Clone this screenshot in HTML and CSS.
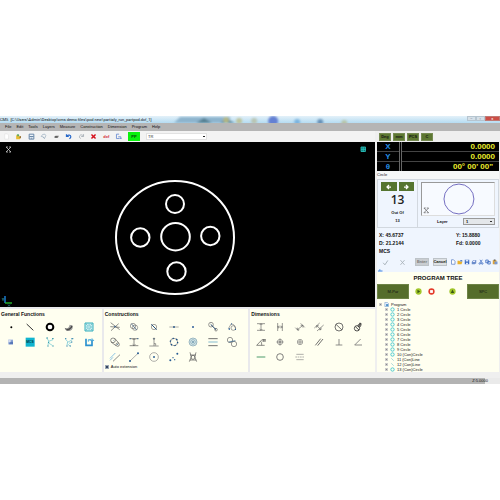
FILE: index.html
```html
<!DOCTYPE html>
<html lang="en">
<head>
<meta charset="utf-8">
<title>CMS</title>
<link rel="stylesheet" href="styles.css">
</head>
<body>
<svg class="defs" aria-hidden="true">
  <symbol id="tree-circle" viewBox="0 0 12 12"><circle cx="6" cy="6" r="4" fill="none" stroke="#35c3cb" stroke-width="2"/></symbol>
  <symbol id="tree-line" viewBox="0 0 12 12"><path d="M3 3l6 6" stroke="#7fc4cc" stroke-width="1.5"/></symbol>
</svg>
<div class="app">
  <header class="titlebar">
    <span>CMS&nbsp; [C:\Users\Admin\Desktop\cms demo files\pcd new\partialy_run_partpcd.dxf_1]</span>
    <svg class="glass" viewBox="0 0 315 7" preserveAspectRatio="none" aria-hidden="true">
      <defs><filter id="soft"><feGaussianBlur stdDeviation="1"/></filter></defs>
      <g filter="url(#soft)">
        <path d="M28 1H78V7H22Z" fill="#8db4cd"/><path d="M44 7l8-5 8 5zM68 7l6-4 9 4z" fill="#547f91"/>
        <circle cx="74" cy="4" r="3" fill="#b3b785"/><circle cx="87" cy="5" r="3" fill="#bec49c"/><circle cx="102" cy="5" r="3" fill="#b9c5b2"/>
        <circle cx="121" cy="5" r="5" fill="#6480d3"/><circle cx="145" cy="6" r="3" fill="#7cb4df"/><circle cx="168" cy="6" r="3" fill="#6792b8"/><circle cx="192" cy="7" r="3" fill="#b7c4a8"/>
      </g>
    </svg>
    <span class="winbtns"><button aria-label="Minimize">–</button><button aria-label="Maximize">▫</button><button class="close" aria-label="Close">×</button></span>
  </header>
  <nav class="menu">
    <a href="#">File</a><a href="#">Edit</a><a href="#">Tools</a><a href="#">Layers</a><a href="#">Measure</a><a href="#">Construction</a><a href="#">Dimension</a><a href="#">Program</a><a href="#">Help</a>
  </nav>
  <main class="body">
    <section class="left">
      <div class="toolbar">
        <div class="tools">
          <button aria-label="New"><svg viewBox="0 0 24 24"><path d="M6 3h9l4 4v14H6z" fill="#fff" stroke="#e0e0e0" stroke-width="2"/></svg></button>
          <button aria-label="Open"><svg viewBox="0 0 24 24"><path d="M4 8h7l2 3h8l-4 10H4z" fill="#e9bd32"/><path d="M6 6l5-3 4 5-5 5z" fill="#55a356"/><path d="M14 14l6-4v9z" fill="#7d5632"/></svg></button>
          <button aria-label="Save"><svg viewBox="0 0 24 24"><path d="M4 4h16v17H4z" fill="#eef3f8" stroke="#58799e" stroke-width="3"/><path d="M5 12h14" stroke="#58799e" stroke-width="3"/><path d="M9 16v4h6v-4z" fill="#7d96b3"/></svg></button>
          <button aria-label="Import"><svg viewBox="0 0 24 24" fill="none" stroke="#8aa0b5" stroke-width="2"><path d="M4 12l5-7 8-1 3 5-4 9-6-5zM10 13l6 7"/></svg></button>
          <button aria-label="Print"><svg viewBox="0 0 24 24"><path d="M4 13l5-4h11l-3 7H5z" fill="#777"/><path d="M7 14h8" stroke="#222" stroke-width="2"/></svg></button>
          <button aria-label="Undo"><svg viewBox="0 0 24 24" fill="none" stroke="#2868c9" stroke-width="4"><path d="M5 4v8h8M6 11c5-6 14-4 14 2 0 4-3 6-5 7"/></svg></button>
          <button aria-label="Redo"><svg viewBox="0 0 24 24" fill="none" stroke="#a5adb5" stroke-width="3"><path d="M19 4v8h-8M18 10c-5-6-13-4-13 3 0 3 2 5 4 6"/></svg></button>
          <button aria-label="Delete"><svg viewBox="0 0 24 24" stroke="#d5101c" stroke-width="5"><path d="M5 5l14 14M19 5L5 19"/></svg></button>
          <button class="dxf">dxf</button>
          <button aria-label="Export"><svg viewBox="0 0 24 24" fill="none" stroke="#6c8ed2" stroke-width="3"><path d="M14 4H5v15h11M11 13h9v7M17 17l3 3 3-3"/></svg></button>
        </div>
        <button class="pp">PP</button>
        <select class="tr" aria-label="Element"><option>TR</option></select>
      </div>
      <div class="canvas">
        <svg class="drawing" viewBox="0 142 375 165" role="img" aria-label="Part drawing">
          <g fill="none" stroke="#fff" stroke-width="2">
            <ellipse cx="175" cy="237.500" rx="59" ry="56.500"/>
            <ellipse cx="175.500" cy="236.700" rx="14.300" ry="13.700"/>
            <circle cx="175" cy="204" r="9"/><circle cx="140.300" cy="237.500" r="9.200"/><circle cx="210.300" cy="236" r="9.200"/><circle cx="176.500" cy="271.500" r="9.200"/>
          </g>
          <g fill="none" stroke="#ddd" stroke-width=".7"><path d="M6 147l5 5M11 147l-5 5M6 147h2M6 152h2M11 147h-2M11 152h-2"/></g>
          <path d="M361 147h4v4.500h-4z" fill="#0b6f6d"/><path d="M361 147h4.500v4.500H361zM363.200 147v5M361 149.300h5" fill="none" stroke="#2cc9c4" stroke-width=".8"/>
          <path d="M5 296v7" stroke="#1d8df0" stroke-width="1.300"/><path d="M5 303h7" stroke="#28c532" stroke-width="1.300"/>
          <path d="M2 298l1 1.500 1-1.500M3 299v2M8 304.500l2 2M10 304.500l-2 2" stroke="#39a4a4" stroke-width=".6" fill="none"/>
        </svg>
      </div>
      <div class="panels">
        <section class="panel">
          <h2>General Functions</h2>
          <div class="icons c5">
            <button aria-label="Point"><svg viewBox="0 0 36 36"><circle cx="19" cy="19" r="3" fill="#000"/></svg></button>
            <button aria-label="Line"><svg viewBox="0 0 36 36"><path d="M8 9l20 19" stroke="#333" stroke-width="3"/></svg></button>
            <button aria-label="Circle"><svg viewBox="0 0 36 36"><circle cx="18" cy="18" r="10" fill="#fff" stroke="#000" stroke-width="6"/></svg></button>
            <button aria-label="Arc"><svg viewBox="0 0 36 36"><path d="M5 20c5 5 14 1 15-9l9 3c2 10-5 16-13 16-5 0-10-3-11-10z" fill="#999"/><path d="M7 23c8 5 18-1 19-9M11 27c9 0 14-6 16-11" fill="none" stroke="#222" stroke-width="2"/></svg></button>
            <button aria-label="Pattern"><svg viewBox="0 0 36 36"><path d="M6 6h24v24H6z" fill="#c6f0f3" stroke="#36aebb" stroke-width="3"/><circle cx="18" cy="18" r="6" fill="none" stroke="#2d9ba9" stroke-width="2" stroke-dasharray="4 2"/><path d="M10 10h2M24 10h2M10 26h2M24 26h2M17 18h2" stroke="#19717e" stroke-width="2"/></svg></button>
            <button aria-label="Plane"><svg viewBox="0 0 36 36"><path d="M10 11h14v14H10z" fill="#8da5d7"/><path d="M10 11h7v7h-7z" fill="#d6def1"/><path d="M18 17h6v8H11z" fill="#5878b8"/></svg></button>
            <button aria-label="MCS"><svg viewBox="0 0 36 36"><path d="M5 5h27v27H5z" fill="#10b4cf"/><text x="18" y="22" text-anchor="middle" class="mcs">MCS</text></svg></button>
            <button aria-label="Chain"><svg viewBox="0 0 36 36" fill="none" stroke="#62c5d0" stroke-width="2"><path d="M9 7l5 8-2 13M14 16l13-5M15 22l10 6"/><path d="M7 6h5M24 8h5M10 30h4M25 30h4M14 18v3" stroke="#2c91a8" stroke-width="3"/></svg></button>
            <button aria-label="Chain points"><svg viewBox="0 0 36 36" fill="none" stroke="#62bfd3" stroke-width="2"><path d="M8 10l6 7-2 11M14 19l14-8M18 22l8-3M15 25l6 5"/><path d="M6 8h4M25 8h6M10 30h4M20 30h4M24 18h4" stroke="#2c80aa" stroke-width="3"/></svg></button>
            <button aria-label="Axis"><svg viewBox="0 0 36 36"><path d="M9 8v20h18V12" fill="none" stroke="#2c91cf" stroke-width="5"/><path d="M16 17v-6h8M20 15l7-7 6 7" fill="none" stroke="#50afdc" stroke-width="3"/></svg></button>
          </div>
        </section>
        <section class="panel">
          <h2>Constructions</h2>
          <div class="icons c7">
            <button aria-label="Intersection"><svg viewBox="0 0 36 36" fill="none" stroke="#555" stroke-width="2"><path d="M5 5l27 21M29 8L6 29M4 17l28 2"/><circle cx="18" cy="17" r="1.500" stroke="#2b619d"/></svg></button>
            <button aria-label="Circle axis"><svg viewBox="0 0 36 36" fill="none" stroke="#777" stroke-width="2"><circle cx="15" cy="15" r="8"/><circle cx="21" cy="20" r="8"/><path d="M10 8l16 19" stroke="#2b4d78"/></svg></button>
            <button aria-label="Circle midpoint"><svg viewBox="0 0 36 36" fill="none" stroke="#777" stroke-width="2"><circle cx="18" cy="18" r="8"/><path d="M10 10l16 16" stroke="#27517f" stroke-width="3"/></svg></button>
            <button aria-label="Midpoint"><svg viewBox="0 0 36 36"><path d="M4 18h28" stroke="#888" stroke-width="2"/><circle cx="18" cy="18" r="3" fill="#315e8b"/></svg></button>
            <button aria-label="Point"><svg viewBox="0 0 36 36"><circle cx="18" cy="18" r="3" fill="#315e9b"/></svg></button>
            <button aria-label="Two circles line"><svg viewBox="0 0 36 36" fill="none" stroke="#666" stroke-width="2"><circle cx="12" cy="11" r="7"/><circle cx="27" cy="26" r="4"/><path d="M11 10l16 16" stroke="#173c69" stroke-width="3"/></svg></button>
            <button aria-label="Tangent circle"><svg viewBox="0 0 36 36" fill="none" stroke="#777" stroke-width="2"><path d="M7 23L16 8l8 4 5 11"/><circle cx="22" cy="21" r="7"/><path d="M8 24h4M15 9h2M27 25h3" stroke="#265b94" stroke-width="4"/></svg></button>
            <button aria-label="Tangent lines"><svg viewBox="0 0 36 36" fill="none" stroke="#555" stroke-width="2"><circle cx="12" cy="13" r="7"/><circle cx="26" cy="26" r="5"/><path d="M17 7l13 15M6 18l15 11"/><path d="M12 12l1 1M25 25l2 2" stroke="#20588a" stroke-width="3"/></svg></button>
            <button aria-label="Mid line"><svg viewBox="0 0 36 36" fill="none" stroke="#555" stroke-width="2"><path d="M5 8h26M5 29h26M18 9v19M14 12l4-4 4 4M14 25l4 4 4-4"/><path d="M5 8h3M28 8h3" stroke="#245a91" stroke-width="3"/></svg></button>
            <button aria-label="Perpendicular"><svg viewBox="0 0 36 36" fill="none" stroke="#666" stroke-width="2"><path d="M18 8v22M4 30h28M18 23h5v6"/><circle cx="18" cy="8" r="2" fill="#265c90"/></svg></button>
            <button aria-label="Circle by points"><svg viewBox="0 0 36 36" fill="none"><circle cx="18" cy="18" r="11" stroke="#777" stroke-width="2"/><circle cx="18" cy="18" r="11" stroke="#184d85" stroke-width="4" stroke-dasharray="4 7.500"/></svg></button>
            <button aria-label="Concentric"><svg viewBox="0 0 36 36" fill="#d9eced" stroke="#779aaa" stroke-width="2"><circle cx="18" cy="18" r="12"/><circle cx="18" cy="18" r="7"/><circle cx="18" cy="18" r="2" fill="#38739b"/></svg></button>
            <button aria-label="Parallel lines"><svg viewBox="0 0 36 36" stroke-width="2.500"><path d="M4 8h28M4 29h28" stroke="#555"/><path d="M4 18h28" stroke="#6cafc9"/></svg></button>
            <button aria-label="Linked circles"><svg viewBox="0 0 36 36" fill="none" stroke="#666" stroke-width="2"><circle cx="12" cy="12" r="8"/><circle cx="24" cy="24" r="8"/><path d="M8 18L28 14" stroke="#265b8b"/></svg></button>
            <button aria-label="Offset line"><svg viewBox="0 0 36 36" stroke-width="2"><path d="M3 22L19 6M3 28L12 19" stroke="#4ea5dc"/><path d="M12 31L33 11" stroke="#555"/></svg></button>
            <button aria-label="Line by points"><svg viewBox="0 0 36 36"><path d="M6 30L30 7" stroke="#888" stroke-width="2"/><circle cx="6" cy="30" r="3" fill="#265b94"/><circle cx="30" cy="7" r="3" fill="#265b94"/></svg></button>
            <button aria-label="Circle by centre"><svg viewBox="0 0 36 36" fill="none" stroke="#888" stroke-width="2"><circle cx="18" cy="18" r="13"/><circle cx="18" cy="18" r="2" fill="#265b94" stroke="#265b94"/></svg></button>
            <button aria-label="Points"><svg viewBox="0 0 36 36" fill="#265b94"><circle cx="7" cy="28" r="3"/><circle cx="15" cy="20" r="2"/><circle cx="20" cy="26" r="2"/><circle cx="28" cy="8" r="3"/></svg></button>
            <button aria-label="Symmetry"><svg viewBox="0 0 36 36" fill="none" stroke="#555" stroke-width="2"><path d="M9 4l4 14-6 14M27 4l-4 14 6 14M9 12h18M8 27h20"/><circle cx="18" cy="19" r="6"/></svg></button>
          </div>
          <label class="check"><input type="checkbox" checked> Auto extension</label>
        </section>
        <section class="panel">
          <h2>Dimensions</h2>
          <div class="icons c6">
            <button aria-label="Vertical distance"><svg viewBox="0 0 36 36" fill="none" stroke="#666" stroke-width="2"><path d="M6 8h24M6 28h24M18 8v20M14 12l4-4 4 4M14 24l4 4 4-4"/></svg></button>
            <button aria-label="Horizontal distance"><svg viewBox="0 0 36 36" fill="none" stroke="#666" stroke-width="2"><path d="M11 6v24M25 6v24M11 18h14M15 14l-4 4 4 4M21 14l4 4-4 4"/></svg></button>
            <button aria-label="Distance"><svg viewBox="0 0 36 36" fill="none" stroke="#666" stroke-width="2"><path d="M4 20l10 10M20 7l12 12M10 26L27 13M10 20v6h6M20 13h7v7"/></svg></button>
            <button aria-label="Line distance"><svg viewBox="0 0 36 36" fill="none" stroke="#666" stroke-width="2"><path d="M4 21L20 6M12 30L32 12M11 14l13 12M11 20v-6h6M18 26h6v-6"/></svg></button>
            <button aria-label="Diameter"><svg viewBox="0 0 36 36" fill="none" stroke="#555" stroke-width="2.500"><circle cx="18" cy="18" r="12"/><path d="M9 10l18 17"/></svg></button>
            <button aria-label="Radius"><svg viewBox="0 0 36 36" fill="none" stroke="#333" stroke-width="2.500"><circle cx="15" cy="22" r="8"/><path d="M10 17l11 10M20 17l6-10M21 7h6v6"/><circle cx="22" cy="14" r="4"/></svg></button>
            <button aria-label="Angle value"><svg viewBox="0 0 36 36" fill="none" stroke="#555" stroke-width="2"><path d="M5 28h24M5 28L22 10M17 16c3 3 3 7 3 12M22 11h10M22 15h10M25 9v8M30 9v8"/></svg></button>
            <button aria-label="Position"><svg viewBox="0 0 36 36" fill="none" stroke="#777" stroke-width="2"><circle cx="18" cy="18" r="8"/><circle cx="18" cy="18" r="3"/><path d="M18 7v22M7 18h22"/></svg></button>
            <button aria-label="Concentricity"><svg viewBox="0 0 36 36" fill="none" stroke="#777" stroke-width="2"><circle cx="18" cy="18" r="8"/><circle cx="18" cy="18" r="4"/><circle cx="18" cy="18" r="1"/></svg></button>
            <button aria-label="Parallelism"><svg viewBox="0 0 36 36" stroke="#555" stroke-width="2.500"><path d="M7 28L23 8M14 29L30 9"/></svg></button>
            <button aria-label="Perpendicularity"><svg viewBox="0 0 36 36" stroke="#777" stroke-width="2.500"><path d="M18 9v18M8 27h20"/></svg></button>
            <button aria-label="Angle"><svg viewBox="0 0 36 36" fill="none" stroke="#777" stroke-width="2.500"><path d="M26 9L8 27h22"/></svg></button>
            <button aria-label="Straightness"><svg viewBox="0 0 36 36"><path d="M5 18h26" stroke="#4d9b6c" stroke-width="3"/></svg></button>
            <button aria-label="Roundness"><svg viewBox="0 0 36 36"><circle cx="18" cy="18" r="10" fill="none" stroke="#666" stroke-width="2.500"/></svg></button>
            <button aria-label="Symmetry"><svg viewBox="0 0 36 36" stroke="#888" stroke-width="2"><path d="M7 10h22M7 26h22"/><path d="M4 18h28" stroke-dasharray="5 2"/></svg></button>
          </div>
        </section>
      </div>
    </section>
    <aside class="right">
      <div class="modes"><button>Deg</button><button>mm</button><button>PCS</button><button>C</button></div>
      <table class="dro">
        <tr><th>X</th><td>0.0000</td></tr>
        <tr><th>Y</th><td>0.0000</td></tr>
        <tr><th>θ</th><td class="deg">00° 00' 00"</td></tr>
      </table>
      <div class="result">
        <p class="kind">Circle</p>
        <div class="card">
          <div class="count">
            <div class="arrows"><button aria-label="Previous"><svg viewBox="0 0 12 12"><path d="M10 6H3M6 2L2 6l4 4" fill="none" stroke="#fff" stroke-width="2.500"/></svg></button><button aria-label="Next"><svg viewBox="0 0 12 12"><path d="M2 6h7M6 2l4 4-4 4" fill="none" stroke="#fff" stroke-width="2.500"/></svg></button></div>
            <p class="num">13</p>
            <p>Out Of</p>
            <p>13</p>
          </div>
          <div class="view">
            <svg class="preview" viewBox="0 0 76 33" role="img" aria-label="Circle preview"><circle cx="39" cy="16.500" r="15.800" fill="none" stroke="#6d67bd"/><path d="M2 26l5 5M7 26l-5 5M2 26h2M2 31h2M7 26H5M7 31H5" stroke="#555" stroke-width=".7"/></svg>
            <div class="layer"><label for="layer">Layer</label><select id="layer"><option>1</option></select></div>
          </div>
        </div>
        <div class="coords"><span>X: 45.6737</span><span>Y: 15.8880</span><span>D: 21.2144</span><span>Fd: 0.0000</span><span>MCS</span></div>
        <div class="actions">
          <button class="flat" aria-label="Accept"><svg viewBox="0 0 24 24"><path d="M4 13l6 7L20 5" fill="none" stroke="#a0acb4" stroke-width="3"/></svg></button>
          <button class="flat" aria-label="Reject"><svg viewBox="0 0 24 24"><path d="M5 4l14 16M19 4L5 20" stroke="#a9b2b9" stroke-width="3"/></svg></button>
          <button class="push off">Enter</button><button class="push">Cancel</button>
          <span class="files">
            <button aria-label="New"><svg viewBox="0 0 24 24"><path d="M6 3h8l6 6v12H6z" fill="#fff" stroke="#5d83c5" stroke-width="3"/></svg></button>
            <button aria-label="Open"><svg viewBox="0 0 24 24"><path d="M2 7h8l2 3h10l-4 11H2z" fill="#e8b12c"/><path d="M13 4h8v6h-8z" fill="#5d83c5"/></svg></button>
            <button aria-label="Save"><svg viewBox="0 0 24 24"><path d="M3 3h18v18H3z" fill="#3968bf"/><path d="M7 3h10v7H7zM8 15h8v6H8z" fill="#dce7f8"/></svg></button>
            <button aria-label="Print"><svg viewBox="0 0 24 24"><path d="M3 12l6-8h12v13l-6 4H3z" fill="#6b8dcb"/><path d="M10 6h8l-3 6H7z" fill="#eef"/></svg></button>
            <button aria-label="Cut"><svg viewBox="0 0 24 24" fill="none" stroke="#3968bf" stroke-width="3"><path d="M8 3l7 12M17 3L9 15"/><circle cx="7" cy="18" r="3"/><circle cx="17" cy="18" r="3"/></svg></button>
            <button aria-label="Copy"><svg viewBox="0 0 24 24" fill="#dce7f8" stroke="#3968bf" stroke-width="3"><path d="M3 4h10v11H3zM11 10h10v10H11z"/></svg></button>
            <button aria-label="Paste"><svg viewBox="0 0 24 24"><path d="M3 5h15v16H3z" fill="#dda235"/><path d="M7 2h7v5H7z" fill="#555"/><path d="M10 10h12v11H10z" fill="#7898d2"/></svg></button>
          </span>
        </div>
        <svg class="grip" viewBox="0 0 12 6" aria-hidden="true"><path d="M2 4h9M4 2h3" stroke="#4386df" stroke-width="2"/></svg>
      </div>
      <section class="program">
        <h2>PROGRAM TREE</h2>
        <div class="run">
          <button class="big">M-Par</button>
          <button class="dot" aria-label="Run"><svg viewBox="0 0 20 20"><circle cx="10" cy="10" r="9" fill="#a2c72b"/><path d="M7 5l8 5-8 5z" fill="#395713"/></svg></button>
          <button class="dot" aria-label="Stop"><svg viewBox="0 0 20 20"><circle cx="10" cy="10" r="9" fill="#e43b2a"/><path d="M6 6h8v8H6z" fill="#fff"/></svg></button>
          <button class="dot last" aria-label="Auto"><svg viewBox="0 0 20 20"><circle cx="10" cy="10" r="9" fill="#a2c72b"/><path d="M10 4l5 10H5z" fill="#395713"/></svg></button>
          <button class="big spc">SPC</button>
        </div>
        <ul class="tree">
          <li class="root"><i></i><svg viewBox="0 0 12 12"><path d="M2 1h6l3 3v7H2z" fill="#e7f1ff" stroke="#3e78b8"/><path d="M5 5h5v5H5z" fill="#4b91c8"/></svg>Program</li>
          <li><i></i><svg><use href="#tree-circle"/></svg>1 Circle</li>
          <li><i></i><svg><use href="#tree-circle"/></svg>2 Circle</li>
          <li><i></i><svg><use href="#tree-circle"/></svg>3 Circle</li>
          <li><i></i><svg><use href="#tree-circle"/></svg>4 Circle</li>
          <li><i></i><svg><use href="#tree-circle"/></svg>5 Circle</li>
          <li><i></i><svg><use href="#tree-circle"/></svg>6 Circle</li>
          <li><i></i><svg><use href="#tree-circle"/></svg>7 Circle</li>
          <li><i></i><svg><use href="#tree-circle"/></svg>8 Circle</li>
          <li><i></i><svg><use href="#tree-circle"/></svg>9 Circle</li>
          <li><i></i><svg><use href="#tree-circle"/></svg>10 (Con)Circle</li>
          <li><i></i><svg><use href="#tree-line"/></svg>11 (Con)Line</li>
          <li><i></i><svg><use href="#tree-line"/></svg>12 (Con)Line</li>
          <li><i></i><svg><use href="#tree-circle"/></svg>13 (Con)Circle</li>
        </ul>
      </section>
    </aside>
  </main>
  <footer class="status"><span>Z:5.0000</span></footer>
</div>
</body>
</html>
```
FILE: styles.css
```css
* { box-sizing: border-box; }
body { margin: 0; padding-top: 116px; background: #fff; font: 4px/6px "Liberation Sans", Arial, sans-serif; color: #111; }
h2, p, ul { margin: 0; padding: 0; }
button { margin: 0; padding: 0; border: 0; background: none; font: inherit; color: inherit; display: flex; align-items: center; justify-content: center; }
select { font: inherit; margin: 0; }
svg { display: block; }
.defs { position: absolute; width: 0; height: 0; }

.app { background: #efefef; }
.titlebar { display: flex; height: 7px; line-height: 7px; background: linear-gradient(#e4f1f9, #b5dcf2); white-space: nowrap; overflow: hidden; color: #111; font-family: Roboto, "Liberation Sans", sans-serif; }
.glass { flex: 1; min-width: 0; height: 7px; }
.winbtns { display: flex; width: 33px; height: 5px; line-height: 5px; }
.winbtns button { flex: 1; background: #d5e0e8; border: 1px solid #b6c5d0; color: #667; }
.winbtns .close { flex: 2; background: #cc4e46; border-color: #c07a75; color: #fff; }

.menu { display: flex; height: 8px; padding-left: 5px; gap: 5px; line-height: 8px; background: #b5b5b5; }
.menu a { color: #111; text-decoration: none; }

.body { display: grid; grid-template-columns: 3fr 1fr; }
.left { min-width: 0; }
.toolbar { display: flex; align-items: center; height: 11px; background: #f3f3f3; }
.tools { display: grid; grid-template-columns: repeat(10, 1fr); flex: 0 0 125px; margin-right: 3px; align-items: center; }
.tools svg { width: 7px; height: 7px; }
.dxf { color: #d2202c; font-weight: bold; }
.pp { width: 12px; height: 9px; background: #0bf20e; color: #064a08; font-weight: bold; }
.tr { width: 61px; height: 7px; margin-left: 6px; padding: 0 1px; line-height: 5px; border: 1px solid #e2e2e2; color: #333; appearance: none; background: linear-gradient(#222, #222) right 1px center / 2px 1px no-repeat #fff; }

.canvas { background: #000; }
.drawing { width: 100%; height: auto; }

.panels { display: grid; grid-template-columns: 102fr 145fr 125fr; gap: 2px; padding-top: 2px; background: #e9e9ec; }
.panel { height: 63px; padding: 2px 3px 0 1px; background: #fffff0; }
.panel h2 { font: bold 5px/6px "Liberation Sans", sans-serif; color: #111; }
.icons { display: grid; grid-auto-rows: 15px; padding-top: 2px; }
.icons svg { width: 12px; height: 12px; }
.c5 { grid-template-columns: repeat(5, 1fr); }
.c7 { grid-template-columns: repeat(7, 1fr); margin-right: 3px; }
.c6 { grid-template-columns: repeat(6, 1fr); margin-right: 4px; }
.mcs { font: bold 10px "Liberation Sans", sans-serif; fill: #043845; }
.check { display: flex; align-items: center; gap: 2px; height: 6px; }
.check input { width: 4px; height: 4px; margin: 0; appearance: none; border: 1px solid #9aa6b5; background: #34465f; }

.right { display: flex; flex-direction: column; min-width: 0; padding: 0 1px 0 2px; }
.modes { display: flex; align-items: center; gap: 2px; height: 11px; padding-left: 2px; }
.modes button { width: 12px; height: 8px; background: #5d7832; color: #111; font-weight: bold; border: 1px solid #768a52; }

.dro { width: 100%; border-collapse: collapse; background: #000; }
.dro th, .dro td { height: 9px; padding: 0; font: bold 8px/9px "Liberation Sans", sans-serif; border-bottom: 1px solid #444; }
.dro th { width: 19%; color: #268fe4; border-right: 3px double #666; }
.dro td { padding-right: 4px; text-align: right; color: #ecec2c; }
.dro .deg { padding-right: 6px; }
.dro tr:last-child > * { border-bottom: 0; }

.result { background: #eff5fe; }
.kind { height: 8px; line-height: 7px; background: #f6f7f7; }
.card { display: grid; grid-template-columns: 1fr 2fr; border: 1px solid #d2d8df; }
.count { padding: 2px 3px; border-right: 1px solid #d2d8df; text-align: center; font-weight: bold; line-height: 8px; }
.arrows { display: flex; gap: 2px; }
.arrows button { flex: 1; height: 9px; background: #557531; }
.arrows svg { width: 6px; height: 6px; }
.num { font: 600 12px/18px "Open Sans", sans-serif; color: #222; }
.view { padding: 2px 3px; }
.preview { width: 100%; height: 34px; border: 1px solid #999; border-right-color: #ddd; border-bottom-color: #ddd; background: #f7faff; }
.layer { display: flex; align-items: center; justify-content: space-between; padding: 2px 0 0 16px; font-weight: bold; }
.layer select { width: 32px; height: 7px; padding: 0 2px; line-height: 5px; border: 1px solid #999; appearance: none; background: linear-gradient(#333, #333) right 2px center / 2px 1px no-repeat #e4e7ea; }
.coords { display: grid; grid-template-columns: 77fr 43fr; padding: 3px 0 0 2px; font: bold 5px/8px "Liberation Sans", sans-serif; white-space: nowrap; }
.actions { display: flex; align-items: center; height: 14px; gap: 4px; padding-left: 4px; }
.flat { width: 9px; }
.flat svg { width: 7px; height: 7px; }
.flat + .flat { margin-left: 4px; }
.push { width: 14px; height: 8px; background: #dde1e4; border: 1px solid #bdc3c8; font-weight: bold; }
.off { margin-left: 4px; color: #777; background: #c9cdd1; }
.files { flex: 1; display: flex; justify-content: space-around; margin-left: -2px; }
.files svg { width: 6px; height: 6px; }
.grip { width: 6px; height: 3px; }

.program { flex: 1; background: #fffff0; }
.program h2 { font: bold 6px/12px "Liberation Sans", sans-serif; text-align: center; color: #111; }
.run { display: flex; align-items: center; gap: 6px; }
.big { width: 32px; height: 15px; background: #556d2b; border: 1px solid #6d8346; color: #111; }
.spc { margin-left: auto; }
.dot svg { width: 7px; height: 7px; }
.dot.last { margin-left: 8px; }
.tree { padding: 3px 0 0 2px; list-style: none; line-height: 5px; }
.tree li { display: flex; align-items: center; height: 5px; gap: 2px; padding-left: 6px; white-space: nowrap; }
.tree .root { padding-left: 0; }
.tree i { width: 3px; height: 3px; border: 1px solid #ccc; background: #888; }
.tree svg { width: 5px; height: 5px; }

.status { height: 6px; margin-top: 6px; padding-right: 12px; line-height: 6px; text-align: right; background: linear-gradient(to right, #b3b3b3 97%, #eaeaea 97%); }
```
